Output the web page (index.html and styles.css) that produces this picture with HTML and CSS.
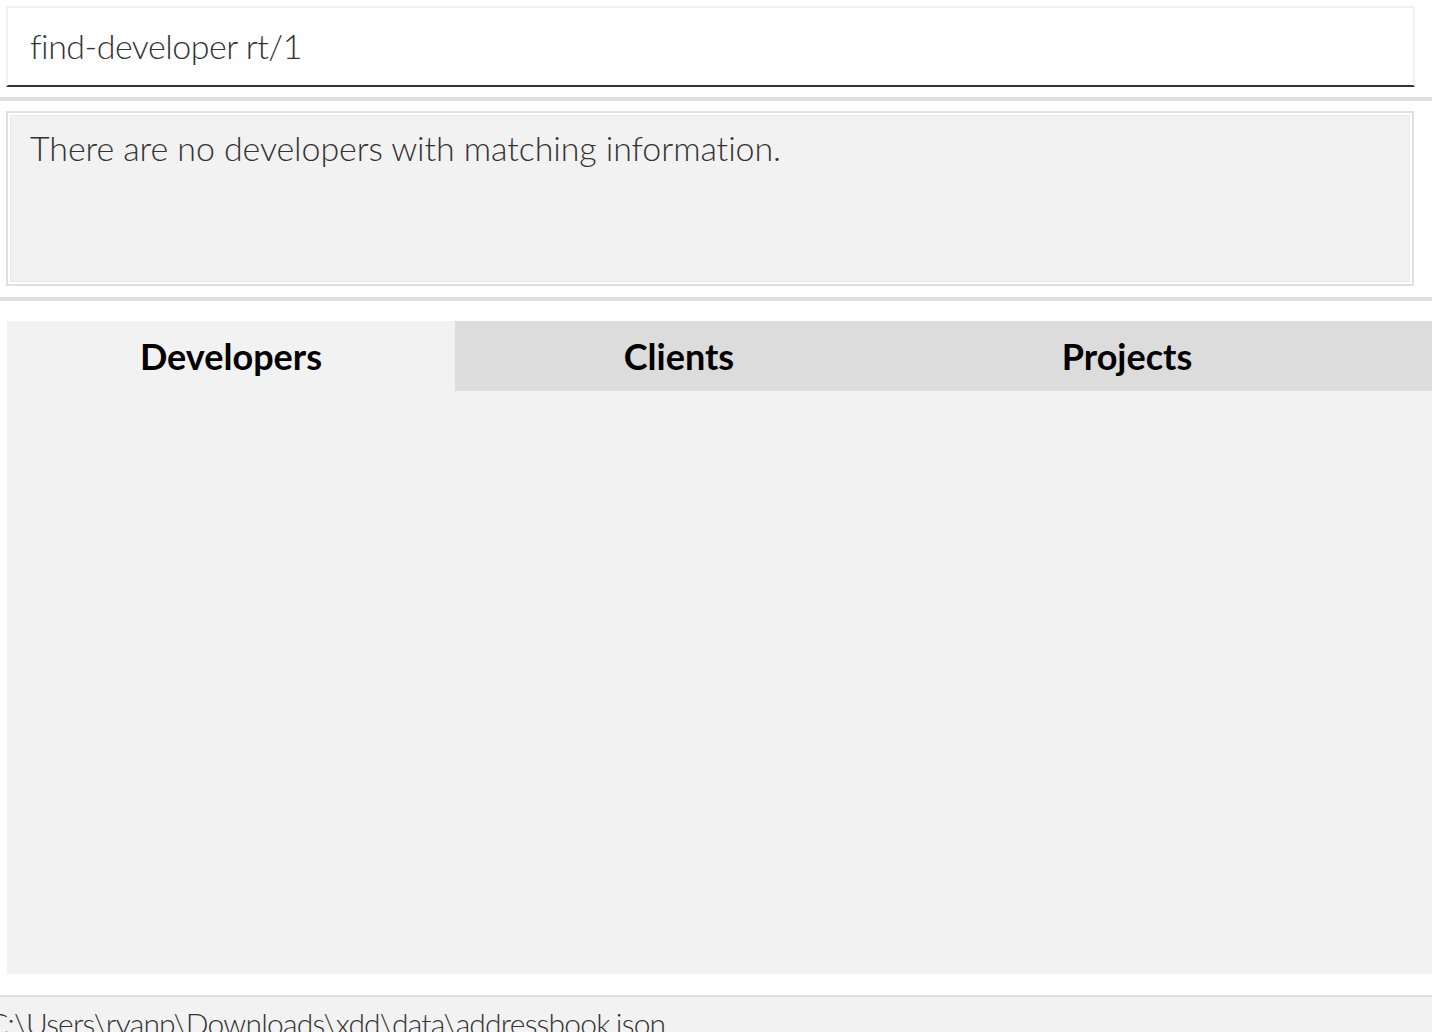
FILE: index.html
```html
<!DOCTYPE html>
<html lang="en">
<head>
<meta charset="utf-8">
<title>Address Book</title>
<link rel="stylesheet" href="styles.css">
</head>
<body>
<div class="app">
  <div class="cmd-wrap">
    <div class="cmd-box">find-developer rt/1</div>
  </div>
  <div class="sep"></div>
  <div class="result-wrap">
    <div class="result-box">
      <div class="result-inner">There are no developers with matching information.</div>
    </div>
  </div>
  <div class="sep"></div>
  <div class="tabs-wrap">
    <div class="tab-pane">
      <div class="tab-header">
        <div class="tab tab-active">Developers</div>
        <div class="tab">Clients</div>
        <div class="tab">Projects</div>
      </div>
      <div class="tab-content"></div>
    </div>
  </div>
  <div class="status-bar">
    <div class="status-text">C:\Users\ryanp\Downloads\xdd\data\addressbook.json</div>
  </div>
</div>
</body>
</html>
```

FILE: styles.css
```css
html, body {
  margin: 0;
  padding: 0;
  background: #ffffff;
  height: 100%;
  overflow: hidden;
}

.app {
  display: flex;
  flex-direction: column;
  height: 1032px;
  font-family: "Segoe UI Light", "Lato", "Liberation Sans", sans-serif;
  font-weight: 300;
  font-variant-ligatures: none;
  color: #333333;
}

.cmd-wrap {
  padding: 6px 17px 10px 6px;
}

.cmd-box {
  box-sizing: border-box;
  height: 81px;
  background: #ffffff;
  border: 2px solid #f0f0f0;
  border-bottom: 2px solid #333333;
  padding: 21px 22px 0 22px;
  font-size: 34px;
  line-height: 34px;
  letter-spacing: -0.5px;
  color: #333333;
}

.sep {
  height: 4px;
  background: #e0e0e0;
  flex: none;
}

.result-wrap {
  padding: 10px 18px 11px 6px;
}

.result-box {
  box-sizing: border-box;
  height: 175px;
  border: 2px solid #e0e0e0;
  padding: 2px;
  background: #ffffff;
}

.result-inner {
  box-sizing: border-box;
  height: 100%;
  background: #f2f2f2;
  border: 1px solid #e8e8e8;
  padding: 15px 18px 0 19px;
  font-size: 34px;
  line-height: 34px;
  letter-spacing: -0.1px;
  color: #333333;
}

.tabs-wrap {
  padding: 20px 0 21px 7px;
}

.tab-pane {
  height: 653px;
  display: flex;
  flex-direction: column;
  background: #f2f2f2;
}

.tab-header {
  display: flex;
  height: 70px;
  background: #dcdcdc;
  flex: none;
}

.tab {
  width: 448px;
  display: flex;
  align-items: center;
  justify-content: center;
  font-family: "Segoe UI", "Lato", "Liberation Sans", sans-serif;
  font-weight: 700;
  font-size: 36px;
  line-height: 36px;
  color: #000000;
}

.tab-active {
  background: #f2f2f2;
}

.tab-content {
  flex: 1;
}

.status-bar {
  flex: 1;
  border-top: 2px solid #e0e0e0;
  background: #f2f2f2;
  overflow: hidden;
  white-space: nowrap;
}

.status-text {
  margin-left: -12px;
  padding-top: 11px;
  font-size: 30px;
  line-height: 30px;
  letter-spacing: -0.8px;
  color: #333333;
}
```
